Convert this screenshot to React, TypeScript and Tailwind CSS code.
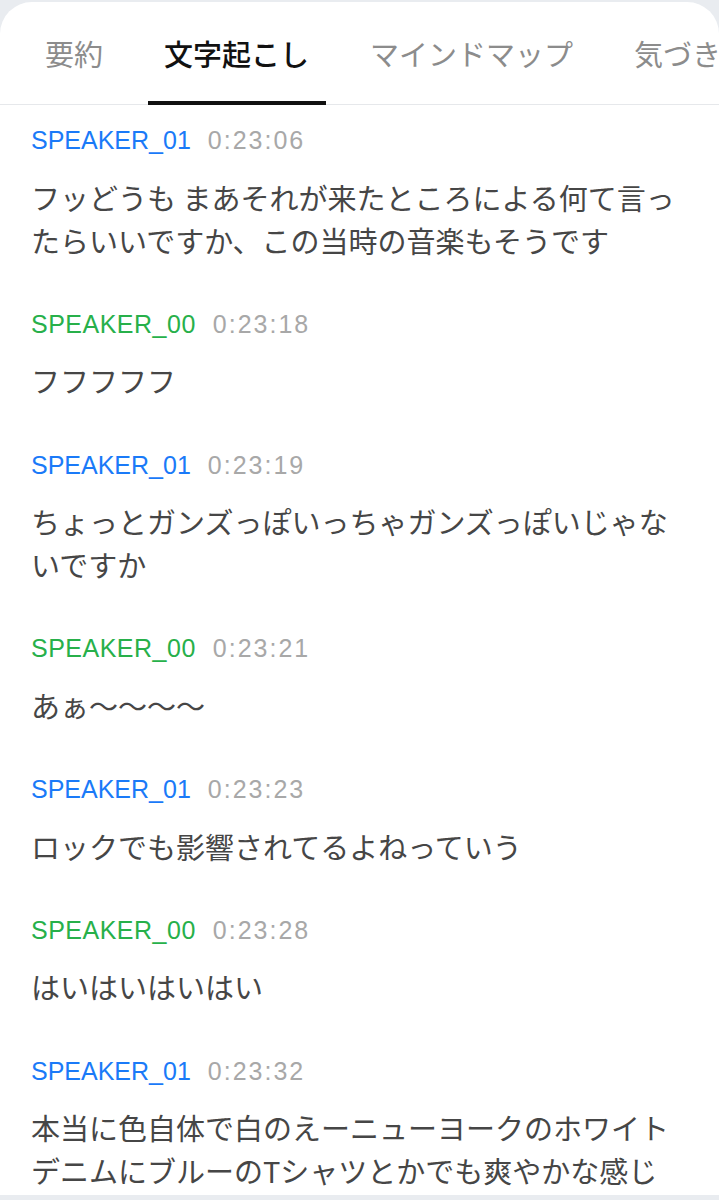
import React from "react";

type Entry = { speaker: string; time: string; text: string };

const entries: Entry[] = [
  { speaker: "SPEAKER_01", time: "0:23:06", text: "フッどうも まあそれが来たところによる何て言ったらいいですか、この当時の音楽もそうです" },
  { speaker: "SPEAKER_00", time: "0:23:18", text: "フフフフフ" },
  { speaker: "SPEAKER_01", time: "0:23:19", text: "ちょっとガンズっぽいっちゃガンズっぽいじゃないですか" },
  { speaker: "SPEAKER_00", time: "0:23:21", text: "あぁ〜〜〜〜" },
  { speaker: "SPEAKER_01", time: "0:23:23", text: "ロックでも影響されてるよねっていう" },
  { speaker: "SPEAKER_00", time: "0:23:28", text: "はいはいはいはい" },
  { speaker: "SPEAKER_01", time: "0:23:32", text: "本当に色自体で白のえーニューヨークのホワイトデニムにブルーのTシャツとかでも爽やかな感じ" },
];

const jp = { fontFamily: '"Noto Sans CJK JP", "Noto Sans", sans-serif' };
const latin = { fontFamily: '"Liberation Sans", Arial, sans-serif' };

export default function App() {
  return (
    <div className="w-[719px] h-[1200px] overflow-hidden bg-[#e9ecf0] pt-[2px]">
      <div className="h-[1193px] bg-white rounded-t-[32px] overflow-hidden flex flex-col">
        <div className="flex items-end h-[103px] border-b border-[#e6e8eb] pl-[28.5px] gap-[28px] whitespace-nowrap" style={jp}>
          {[
            { label: "要約", active: false },
            { label: "文字起こし", active: true },
            { label: "マインドマップ", active: false },
            { label: "気づき", active: false },
          ].map((t) => (
            <div key={t.label} className="relative px-[16.5px] h-full flex items-center shrink-0">
              <span
                className={
                  "text-[29px] leading-[40px] " +
                  (t.active ? "text-[#111111] font-medium" : "text-[#8c8c8c]")
                }
              >
                {t.label}
              </span>
              {t.active && (
                <div className="absolute left-0 right-0 bottom-[-1px] h-[4px] bg-[#111111]" />
              )}
            </div>
          ))}
        </div>
        <div className="px-[31px] pt-[19px] flex flex-col gap-[46.3px]">
          {entries.map((e, i) => (
            <div key={i} className="flex flex-col">
              <div className="flex items-center h-[32px] gap-[17px]" style={latin}>
                <span
                  className={
                    "text-[25px] leading-[32px] " +
                    (e.speaker === "SPEAKER_01" ? "text-[#1a7af8]" : "text-[#27b04a] tracking-[0.5px]")
                  }
                >
                  {e.speaker}
                </span>
                <span className="text-[25px] leading-[32px] text-[#a8a8a8] tracking-[2px]">{e.time}</span>
              </div>
              <p className="mt-[19.5px] text-[29px] leading-[43px] text-[#464646]" style={jp}>
                {e.text}
              </p>
            </div>
          ))}
        </div>
      </div>
    </div>
  );
}
